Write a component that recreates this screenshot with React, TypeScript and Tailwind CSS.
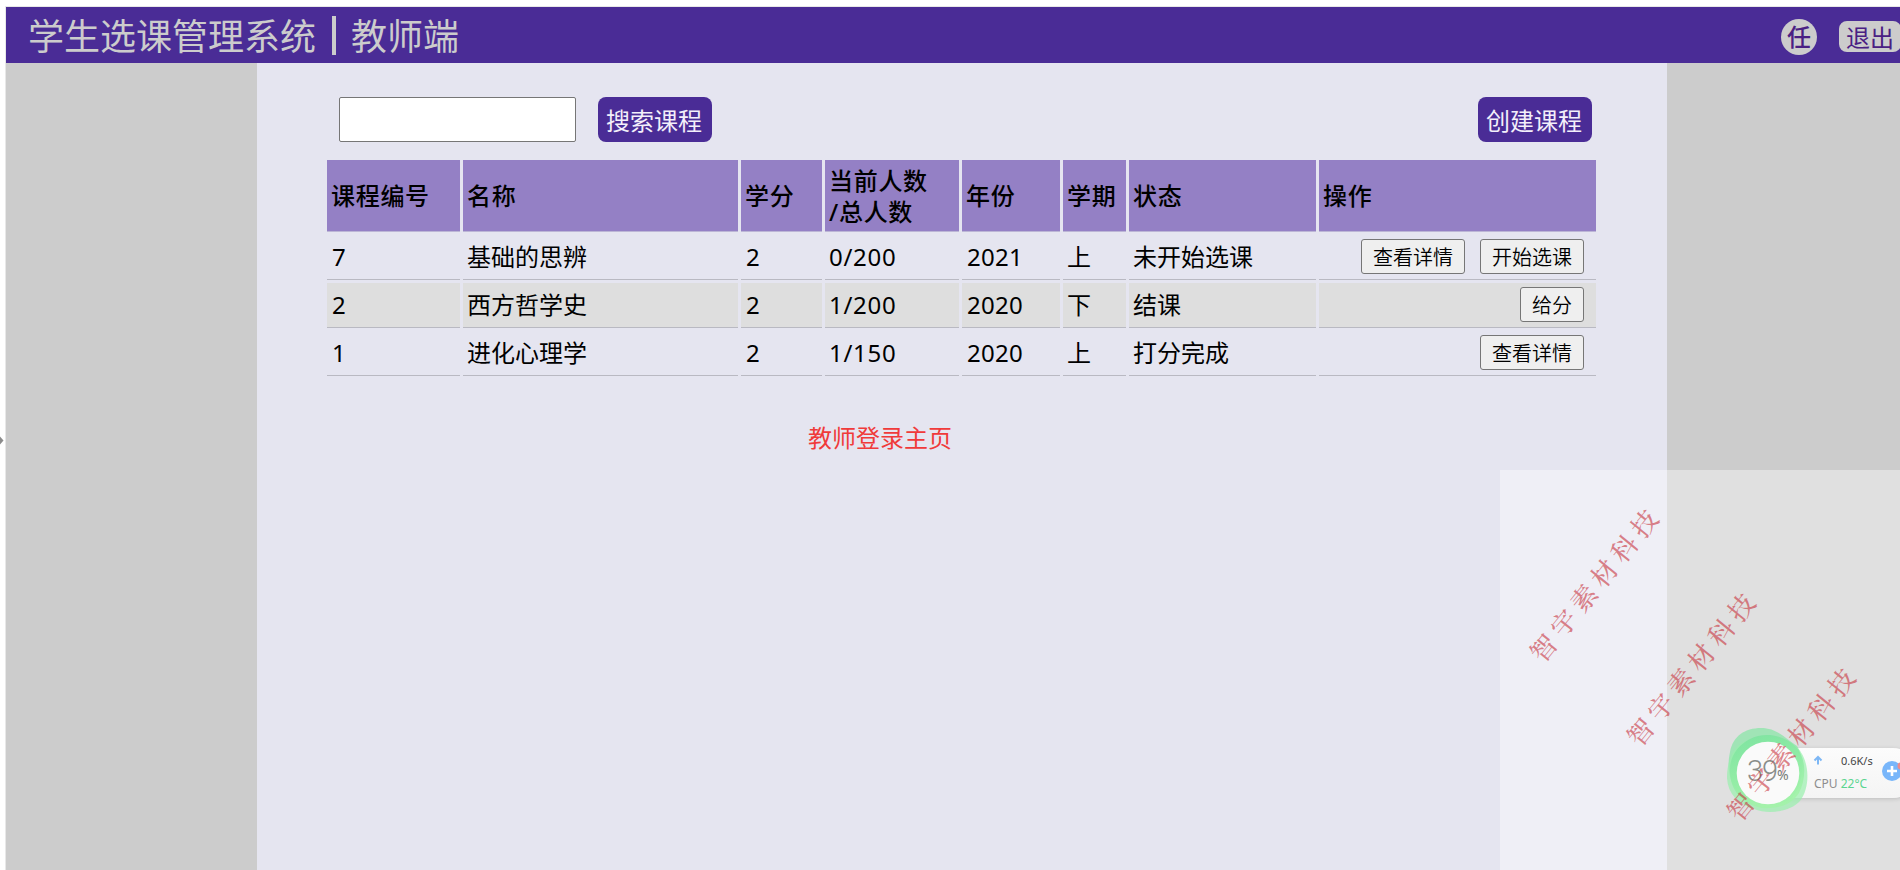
import type { ReactNode } from "react";

const COLS =
  "grid grid-cols-[133px_275px_81px_134px_98px_63px_187px_277px] gap-x-[3px]";

const HEADERS: ReactNode[] = [
  "课程编号",
  "名称",
  "学分",
  <>
    当前人数
    <br />
    /总人数
  </>,
  "年份",
  "学期",
  "状态",
  "操作",
];

interface Course {
  cells: string[];
  actions: string[];
}

const COURSES: Course[] = [
  {
    cells: ["7", "基础的思辨", "2", "0/200", "2021", "上", "未开始选课"],
    actions: ["查看详情", "开始选课"],
  },
  {
    cells: ["2", "西方哲学史", "2", "1/200", "2020", "下", "结课"],
    actions: ["给分"],
  },
  {
    cells: ["1", "进化心理学", "2", "1/150", "2020", "上", "打分完成"],
    actions: ["查看详情"],
  },
];

function Header() {
  return (
    <header className="flex h-14 shrink-0 items-center bg-[#4a2c96] pl-[22px] text-[#cccccc]">
      <h1 className="flex items-center text-[36px] leading-[50px] whitespace-nowrap">
        <span className="pt-1">学生选课管理系统</span>
        <span className="mr-[15px] ml-[16px] h-[39px] w-1 bg-[#cccccc]" />
        <span className="pt-1">教师端</span>
      </h1>
      <div className="mt-[3px] -mr-px ml-auto flex items-center gap-[22px] text-2xl text-[#4a2083]">
        <span className="flex size-9 items-center justify-center rounded-full bg-[#cccccc] leading-9 font-medium">
          任
        </span>
        <button className="h-[31px] w-[62px] rounded-lg bg-[#cccccc] text-center leading-[33px] whitespace-nowrap">
          退出
        </button>
      </div>
    </header>
  );
}

function PrimaryButton({ children }: { children: ReactNode }) {
  return (
    <button className="h-[45px] w-[114px] rounded-lg bg-[#4a2c96] pr-0.5 text-2xl leading-[47px] whitespace-nowrap text-[#f3effa]">
      {children}
    </button>
  );
}

function CourseTable() {
  return (
    <div className="mt-[18px] flex flex-col gap-[3px] text-2xl text-black">
      <div className={COLS}>
        {HEADERS.map((h, i) => (
          <div
            key={i}
            className="flex h-[72px] items-center border-b border-[#bcb6d6] bg-[#9480c5] pl-1 leading-[31px] font-medium tracking-[0.7px] whitespace-nowrap"
          >
            <span>{h}</span>
          </div>
        ))}
      </div>
      {COURSES.map((c, r) => (
        <div key={r} className={COLS}>
          {c.cells.map((t, i) => (
            <div
              key={i}
              className={
                r % 2
                  ? "h-[45px] border-b border-[#b9b9c2] bg-[#dedede] pl-1 leading-[44px] whitespace-nowrap"
                  : "h-[45px] border-b border-[#b9b9c2] pl-1 leading-[44px] whitespace-nowrap"
              }
            >
              <span
                className={
                  i === 3
                    ? "tracking-[0.7px]"
                    : i === 4
                      ? "pl-px tracking-[0.3px]"
                      : i === 0 || i === 2
                        ? "pl-px"
                        : ""
                }
              >
                {t}
              </span>
            </div>
          ))}
          <div
            className={
              r % 2
                ? "flex h-[45px] items-start justify-end gap-[15px] border-b border-[#b9b9c2] bg-[#dedede] pt-1 pr-3"
                : "flex h-[45px] items-start justify-end gap-[15px] border-b border-[#b9b9c2] pt-1 pr-3"
            }
          >
            {c.actions.map((a) => (
              <button
                key={a}
                className="h-[35px] rounded-[3px] border border-[#767676] bg-[#efefef] px-[11px] text-xl leading-[36px] font-[350] whitespace-nowrap"
              >
                {a}
              </button>
            ))}
          </div>
        </div>
      ))}
    </div>
  );
}

function SystemMonitor() {
  return (
    <div className="absolute top-[248px] left-[240px] h-[100px] w-[160px] font-['Noto_Sans','Noto_Sans_CJK_SC',sans-serif]">
      <div className="absolute top-[30px] left-[40px] h-[50px] w-[138px] rounded-r-full bg-linear-to-b from-[#fcfcfc] to-[#f4f4f4] shadow-[0_1px_4px_rgba(0,0,0,0.16)]" />
      <svg className="absolute top-0 left-[-20px]" width="180" height="100" viewBox="0 0 180 100">
        <defs>
          <linearGradient id="ring" x1="0" y1="0" x2="0.3" y2="1">
            <stop offset="0" stopColor="#78e29e" />
            <stop offset="1" stopColor="#a2f3a8" />
          </linearGradient>
        </defs>
        <path
          d="M41 10C57 10 65 20 77 28C85 40 84 66 72 80C60 90 36 88 22 78C8 66 7 48 10 34C13 18 25 10 41 10Z"
          fill="#8be6a8"
          opacity="0.75"
        />
        <path
          d="M24 24C44 14 74 20 82 36C90 50 89 72 80 83C70 94 48 97 34 91C18 86 8 76 7 60C7 44 12 30 24 24Z"
          fill="#98f0ac"
          opacity="0.7"
        />
        <path
          d="M30 21C43 14 64 16 76 29C87 41 86 61 79 75C71 88 56 91 42 90C23 87 10 72 10 54C9 39 18 27 30 21Z"
          fill="url(#ring)"
          opacity="0.85"
        />
        <circle cx="48" cy="55" r="31.3" fill="#fafafa" />
        <path
          d="M98 46.500V39.500M94.500 42.500L98 39L101.500 42.500"
          fill="none"
          stroke="#7db7f5"
          strokeWidth="2"
        />
      </svg>
      <span className="absolute top-[32px] left-[7px] font-['Roboto',sans-serif] text-[29px] leading-[42px] font-light tracking-[-1px] text-[#8a8e8a]">
        39
      </span>
      <span className="absolute top-[47px] left-[37px] text-[14px] leading-[20px] text-[#777b78]">
        %
      </span>
      <span className="absolute top-[35px] left-[101px] text-[11px] leading-4 whitespace-nowrap text-[#444]">
        0.6K/s
      </span>
      <span className="absolute top-[58px] left-[74px] text-xs leading-4 whitespace-nowrap text-[#8d8d8d]">
        CPU <span className="text-[#5bd590]">22°C</span>
      </span>
      <svg className="absolute top-[43px] left-[141px]" width="19" height="20" viewBox="0 0 19 20">
        <circle cx="11" cy="10" r="10" fill="#78b6fa" />
        <path d="M11 5V15M6 10H16" stroke="#fff" strokeWidth="2.600" />
        <circle cx="20" cy="5" r="3.500" fill="#ef8a8a" />
      </svg>
    </div>
  );
}

const MARK =
  "absolute flex h-8 w-48 -rotate-[51deg] text-[26px] leading-8 text-[#c8323c]/60 font-['KaiTi','Noto_Serif_CJK_SC','Noto_Sans_CJK_SC',serif]";

function Watermark({ place }: { place: string }) {
  return (
    <div className={place}>
      <div className={MARK}>
        {[..."智宇素材科技"].map((ch) => (
          <span key={ch} className="w-8 text-center font-medium">
            {ch}
          </span>
        ))}
      </div>
    </div>
  );
}

export default function App() {
  return (
    <div className="relative flex h-[870px] w-[1900px] flex-col overflow-hidden bg-white pt-[6px] pl-[5px] font-['Noto_Sans','Noto_Sans_CJK_SC',sans-serif]">
      <svg className="absolute top-[436px] left-0" width="4" height="9" viewBox="0 0 4 9">
        <path d="M0 0.500L3.500 4.500L0 8.500Z" fill="#8c8c8c" />
      </svg>
      <div className="flex grow flex-col border-t border-l border-[#e8e8e8]">
        <Header />
        <div className="flex grow bg-[#cccccc] pl-[251px]">
          <main className="w-[1410px] bg-[#e5e5f0] pt-[34px] pr-[71px] pl-[70px]">
            <div className="flex pr-1 pl-3">
              <input className="h-[45px] w-[237px] rounded-[2px] border border-[#767676] bg-white px-2 text-2xl" />
              <div className="ml-[22px] flex grow justify-between">
                <PrimaryButton>搜索课程</PrimaryButton>
                <PrimaryButton>创建课程</PrimaryButton>
              </div>
            </div>
            <CourseTable />
            <p className="mt-[44px] pl-[481px] text-2xl leading-9 text-[#f03a3a]">
              教师登录主页
            </p>
          </main>
        </div>
      </div>
      <div className="absolute top-[470px] left-[1500px] h-[400px] w-[400px] overflow-hidden bg-white/40">
        <SystemMonitor />
        <Watermark place="absolute top-[99px] left-[-3px]" />
        <Watermark place="absolute top-[183px] left-[94px]" />
        <Watermark place="absolute top-[258px] left-[194px]" />
      </div>
    </div>
  );
}
